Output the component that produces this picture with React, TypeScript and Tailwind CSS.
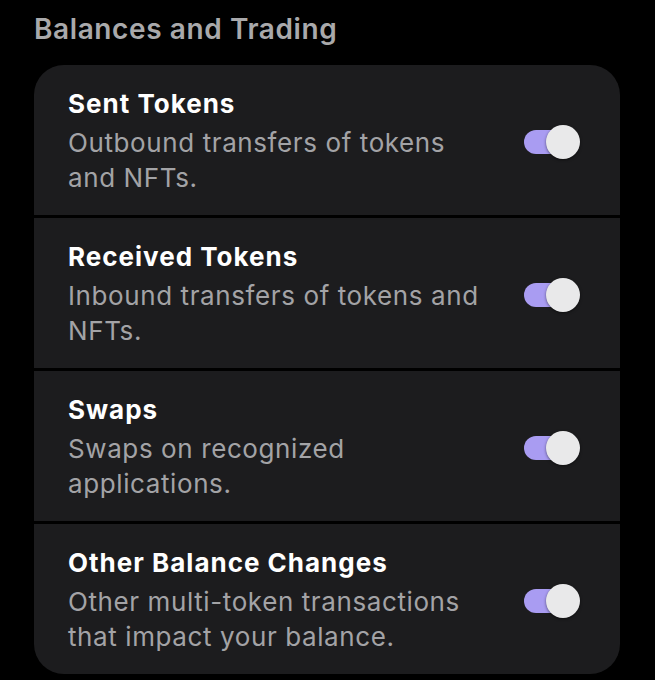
const rows = [
  { title: "Sent Tokens", desc: "Outbound transfers of tokens and NFTs." },
  { title: "Received Tokens", desc: "Inbound transfers of tokens and NFTs." },
  { title: "Swaps", desc: "Swaps on recognized applications." },
  {
    title: "Other Balance Changes",
    desc: "Other multi-token transactions that impact your balance.",
  },
];

function Toggle() {
  return (
    <div className="relative w-[56px] h-[34px] shrink-0">
      <div className="absolute left-0 top-[5px] w-[48px] h-[24px] rounded-full bg-[#a99cf2]" />
      <div className="absolute right-0 top-0 w-[34px] h-[34px] rounded-full bg-[#e9e9ea] shadow-[0_1px_3px_rgba(0,0,0,0.5)]" />
    </div>
  );
}

export default function App() {
  return (
    <div
      className="min-h-[680px] bg-black px-[34px] pt-[12px] text-white"
      style={{ fontFamily: "Inter, 'Noto Sans', sans-serif" }}
    >
      <h2 className="text-[28px] leading-[34px] font-semibold tracking-[0.6px] text-[#a9a9ab] mb-[19px]">
        Balances and Trading
      </h2>
      <div className="w-[586px] rounded-[30px] overflow-hidden flex flex-col">
        {rows.map((r, i) => (
          <div
            key={r.title}
            className={`flex items-center justify-between pl-[34px] pr-[40px] pt-[23px] pb-[20px] bg-[#1c1c1e] ${
              i > 0 ? "border-t-[3px] border-black" : ""
            }`}
          >
            <div className="w-[420px]">
              <div className="text-[26px] leading-[32px] font-bold tracking-[1px] text-white">
                {r.title}
              </div>
              <div className="mt-[5px] text-[26px] leading-[35px] tracking-[0.6px] text-[#a3a3a6]">
                {r.desc}
              </div>
            </div>
            <Toggle />
          </div>
        ))}
      </div>
    </div>
  );
}
